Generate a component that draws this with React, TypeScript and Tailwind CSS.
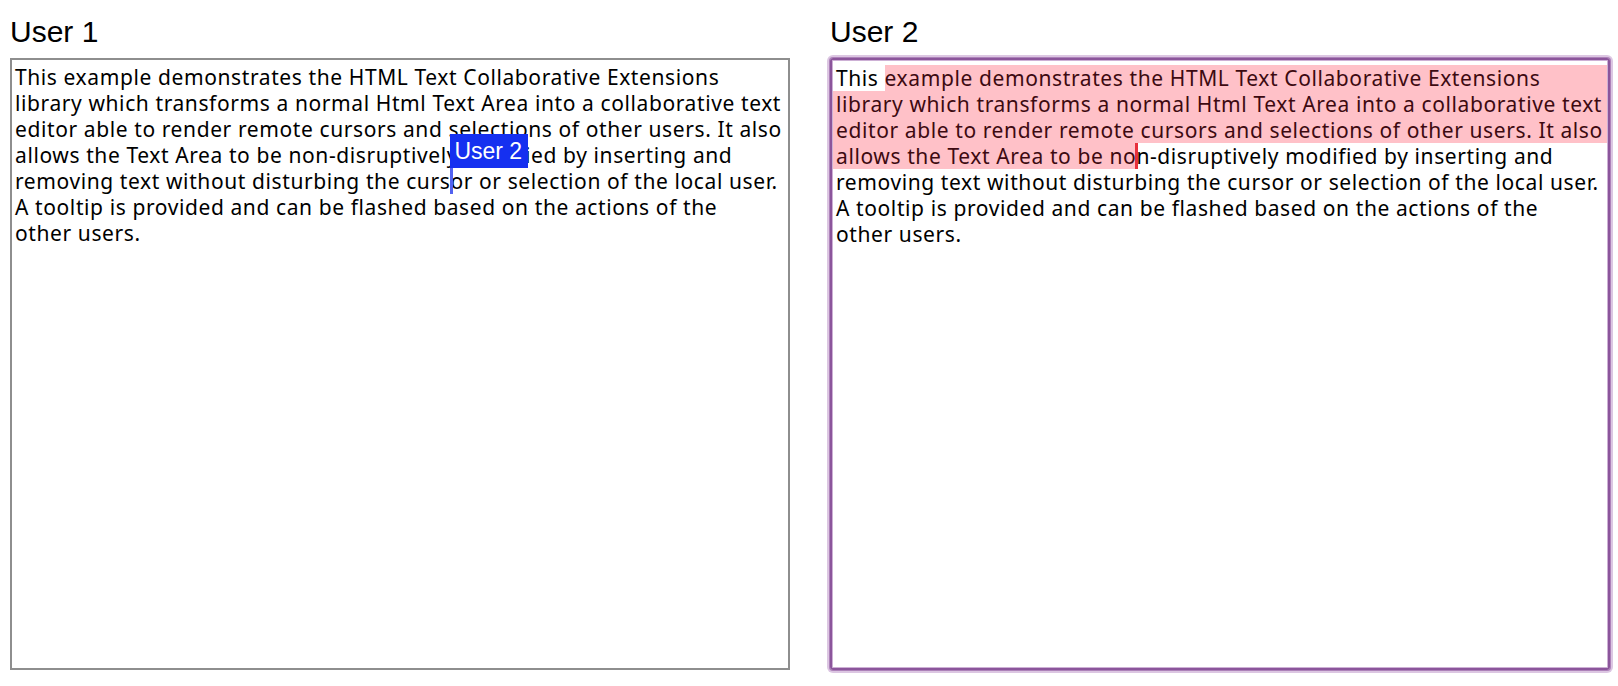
const textFont = "font-['Noto_Sans','Open_Sans',sans-serif] tracking-[0.6px]"

const lines = [
  'This example demonstrates the HTML Text Collaborative Extensions',
  'library which transforms a normal Html Text Area into a collaborative text',
  'editor able to render remote cursors and selections of other users. It also',
  'allows the Text Area to be non-disruptively modified by inserting and',
  'removing text without disturbing the cursor or selection of the local user.',
  'A tooltip is provided and can be flashed based on the actions of the',
  'other users.',
]

function RemoteCursor() {
  return (
    <span className="relative inline-block w-0 h-[26px] align-top">
      <span className="absolute left-0 top-0 w-[3px] h-[26px] bg-[#5262f0]"></span>
      <span className="absolute left-0 bottom-[26px] w-[78px] h-[34px] bg-[#1530f0] text-white text-[23px] leading-[34px] pl-[4px] tracking-normal font-['Liberation_Sans',Arial,sans-serif] whitespace-nowrap">
        User 2
      </span>
    </span>
  )
}

function LocalCaret() {
  return (
    <span className="relative inline-block w-0 h-[26px] align-top">
      <span className="absolute left-[-1px] top-0 w-[3px] h-[26px] bg-[#e8303c]"></span>
    </span>
  )
}

export default function App() {
  return (
    <div className="w-[1618px] h-[686px] bg-white flex gap-[40px] pl-[10px] pt-[14px] overflow-hidden">
      {/* user 1 */}
      <div className="w-[780px] flex flex-col">
        <h2 className="h-[36px] mb-[8px] text-[30px] leading-[36px] text-black font-['Liberation_Sans',Arial,sans-serif]">
          User 1
        </h2>
        <div className={`h-[612px] border-2 border-[#8e8e8e] px-[3px] pt-[4px] pb-[2px] text-[21px] leading-[26px] text-black ${textFont}`}>
          {lines.map((l, i) =>
            i === 4 ? (
              <div key={i} className="whitespace-nowrap">
                removing text without disturbing the curs
                <RemoteCursor />
                or or selection of the local user.
              </div>
            ) : (
              <div key={i} className="whitespace-nowrap">{l}</div>
            )
          )}
        </div>
      </div>

      {/* user 2, focused */}
      <div className="w-[780px] flex flex-col">
        <h2 className="h-[36px] mb-[8px] text-[30px] leading-[36px] text-black font-['Liberation_Sans',Arial,sans-serif]">
          User 2
        </h2>
        <div
          className={`h-[612px] rounded-[3px] border-2 border-[#8b559b] p-[1px] shadow-[0_0_0_1px_#ad82b9,0_0_0_3px_#dcc6e2,inset_0_0_0_1px_#cdb0d5] text-[21px] leading-[26px] text-black ${textFont}`}
        >
          <div className="pt-[4px]">
            <div className="flex whitespace-nowrap">
              <span className="pl-[3px] bg-white">This{'\u00a0'}</span>
              <span className="flex-1 bg-[#ffc1c8] text-[#3d0a11]">
                example demonstrates the HTML Text Collaborative Extensions
              </span>
            </div>
            <div className="whitespace-nowrap pl-[3px] bg-[#ffc1c8] text-[#3d0a11]">{lines[1]}</div>
            <div className="whitespace-nowrap pl-[3px] bg-[#ffc1c8] text-[#3d0a11]">{lines[2]}</div>
            <div className="whitespace-nowrap">
              <span className="pl-[3px] bg-[#ffc1c8] text-[#3d0a11] inline-block">allows the Text Area to be no</span>
              <LocalCaret />
              n-disruptively modified by inserting and
            </div>
            {lines.slice(4).map((l, i) => (
              <div key={i} className="whitespace-nowrap pl-[3px]">{l}</div>
            ))}
          </div>
        </div>
      </div>
    </div>
  )
}
